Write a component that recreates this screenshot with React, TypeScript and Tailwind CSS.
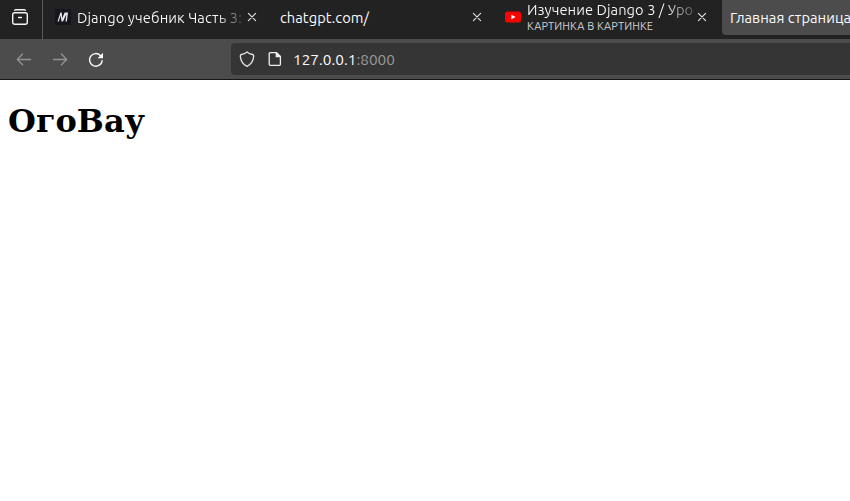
import type { ReactNode } from 'react';

function CloseIcon() {
  return (
    <svg className="size-[10px] shrink-0" viewBox="0 0 10 10" fill="none" stroke="#e6e6e6" strokeWidth="1.1" strokeLinecap="round">
      <path d="M1.4 1.4l7.2 7.2M8.6 1.4L1.4 8.6" />
    </svg>
  );
}

function Tab({ icon, children }: { icon?: ReactNode; children: ReactNode }) {
  return (
    <div className="flex h-[35px] w-[225px] shrink-0 items-center pl-2">
      {icon}
      <div className="min-w-0 flex-1 overflow-hidden whitespace-nowrap">{children}</div>
      <div className="mb-0.5 flex w-7 shrink-0 pl-[3px]">
        <CloseIcon />
      </div>
    </div>
  );
}

function MdnLogo() {
  return (
    <svg className="mr-1.5 mb-0.5 size-4 shrink-0" viewBox="0 0 16 16">
      <rect width="16" height="16" fill="#15141f" />
      <path d="M2.5 12.5L5.4 3.6L6.7 3.6L7.2 9L9.7 3.6H13L11.9 12.5H10.5L11.3 5.6L8 12.5H6.5L5.7 6.6L3.8 12.5z" fill="#e6e6e6" />
    </svg>
  );
}

function YoutubeLogo() {
  return (
    <svg className="mr-1.5 mb-0.5 size-4 shrink-0" viewBox="0 0 16 16">
      <rect y="2.5" width="16" height="11" rx="2.5" fill="#ff0000" />
      <path d="M6.4 5.7v4.6l4.2-2.3z" fill="#fff" />
    </svg>
  );
}

function TabStrip() {
  return (
    <div className="flex h-[39px] bg-[#222222] text-[14.667px] leading-5 text-[#fbfbfe]">
      <div className="flex w-[43px] shrink-0 justify-center border-r border-[#5a5a5a] pt-[9px] pr-0.5">
        <svg className="size-4" viewBox="0 0 16 16" fill="none" stroke="#f4f4f4" strokeWidth="1.4" strokeLinecap="round">
          <path d="M2.7 1.2Q3.2.7 4 .7h8q.8 0 1.3.5" />
          <rect x=".7" y="3.7" width="14.6" height="11.6" rx="2" />
          <path d="M6.6 8.5h2.8" />
        </svg>
      </div>
      <div className="flex pl-1">
        <Tab icon={<MdnLogo />}>
          <div className="bg-linear-to-r from-[#fbfbfe] from-83% to-[#222222] to-104% bg-clip-text tracking-[0.1px] text-transparent">
            Django учебник Часть 3:
          </div>
        </Tab>
        <Tab>
          <span className="tracking-[0.05px]">chatgpt.com/</span>
        </Tab>
        <Tab icon={<YoutubeLogo />}>
          <div className="bg-linear-to-r from-[#fbfbfe] from-83% to-[#222222] to-106% bg-clip-text leading-4 tracking-[0.06px] text-transparent">
            Изучение Django 3 / Уро
          </div>
          <div className="text-[11px] leading-4 tracking-[0.12px] text-[#d2d2d4]">КАРТИНКА В КАРТИНКЕ</div>
        </Tab>
        <div className="flex h-[35px] w-[225px] items-center rounded-b bg-[#4c4c4c] pl-2 tracking-[0.05px] whitespace-nowrap">
          Главная страница
        </div>
      </div>
    </div>
  );
}

function Toolbar() {
  return (
    <div className="flex h-[41px] items-center border-b border-[#161616] bg-[#4c4c4c]">
      <div className="flex w-[231px] shrink-0 items-center gap-5 pl-4">
        <svg className="size-4" viewBox="0 0 16 16" fill="none" stroke="#929292" strokeWidth="1.3" strokeLinecap="round" strokeLinejoin="round">
          <path d="M14.5 8.5H1.7M6.6 3L1.3 8.5 6.6 13.8" />
        </svg>
        <svg className="size-4" viewBox="0 0 16 16" fill="none" stroke="#929292" strokeWidth="1.3" strokeLinecap="round" strokeLinejoin="round">
          <path d="M1.5 8.5h12.8M9.4 3L14.7 8.5 9.4 13.8" />
        </svg>
        <svg className="size-4" viewBox="0 0 16 16" fill="none" stroke="#fafafa" strokeWidth="1.4" strokeLinecap="round">
          <path d="M12.4 4.4A6.3 6.3 0 1 0 14.2 9.6" />
          <path d="M15 1.8v5.4H9.6z" fill="#fafafa" stroke="none" />
        </svg>
      </div>
      <div className="flex h-8 flex-1 items-center rounded-l bg-[#353535] pl-2">
        <svg className="mr-3 size-4 shrink-0" viewBox="0 0 16 16" fill="none" stroke="#e8e8e8" strokeWidth="1.3" strokeLinejoin="round">
          <path d="M8 .9Q9.6 2.7 13.5 3.5q1.3.3 1.2 1.7C14.3 9.5 12 13.4 8 15.3 4 13.4 1.7 9.5 1.3 5.2q-.1-1.4 1.2-1.7Q6.4 2.7 8 .9z" />
        </svg>
        <svg className="mr-2.5 size-4 shrink-0" viewBox="0 0 16 16" fill="none" stroke="#f0f0f0" strokeWidth="1.3" strokeLinejoin="round">
          <path d="M3.2 1.7H9.5L13.4 5.5v7.8a1 1 0 0 1-1 1H3.2a1 1 0 0 1-1-1V2.7a1 1 0 0 1 1-1z" />
          <path d="M9.3 1.7v4h4z" fill="#f0f0f0" />
        </svg>
        <span className="pt-0.5 text-[15.4px] leading-5 text-[#fbfbfe]">
          127.0.0.1<span className="text-[#9a9a9a]">:8000</span>
        </span>
      </div>
    </div>
  );
}

export default function App() {
  return (
    <div className="h-[501px] w-full overflow-hidden bg-white font-['Ubuntu','Noto_Sans',sans-serif]">
      <TabStrip />
      <Toolbar />
      <main className="px-2 pt-[23px]">
        <h1 className="font-['DejaVu_Serif',serif] text-[32px] leading-[37px] font-bold text-black">ОгоВау</h1>
      </main>
    </div>
  );
}
